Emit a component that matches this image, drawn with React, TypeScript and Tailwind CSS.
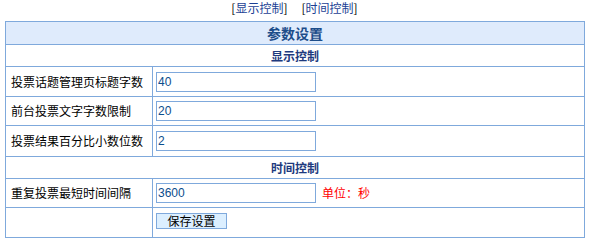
import React from "react";

const font = { fontFamily: '"Noto Sans CJK SC", "Liberation Sans", sans-serif' };
const inputFont = { fontFamily: '"Liberation Sans", Arial, sans-serif' };

function Row({ label, value, unit, h }: { label: string; value: string; unit?: string; h: string }) {
  return (
    <div className={`flex border-t border-[#7fa9dc] ${h}`}>
      <div className="w-[146px] flex items-center pl-[5px] text-[12px] text-black">{label}</div>
      <div className="flex-1 border-l border-[#7fa9dc] flex items-center pl-[3px]">
        <input
          readOnly
          value={value}
          className="w-[160px] h-[20px] border border-[#7fa9dc] px-[1px] text-[12px] text-[#0b4d8c] outline-none"
          style={inputFont}
        />
        {unit && <span className="ml-[6px] text-[12px] text-[#ff0000]">{unit}</span>}
      </div>
    </div>
  );
}

export default function App() {
  return (
    <div className="w-[589px] h-[242px] bg-white" style={font}>
      <div className="h-[21px] flex justify-center items-start text-[12px] leading-[16px] text-black">
        <span>
          [<a className="text-[#1c3f94]">显示控制</a>]
        </span>
        <span className="ml-[14px]">
          [<a className="text-[#1c3f94]">时间控制</a>]
        </span>
      </div>
      <div className="ml-[5px] w-[580px] border border-[#7fa9dc]">
        <div className="h-[22px] bg-[#dfebfc] flex items-center justify-center text-[14px] font-bold text-[#1d4d8a]">
          参数设置
        </div>
        <div className="h-[22px] border-t border-[#7fa9dc] flex items-center justify-center text-[12px] font-bold text-[#1e3a7e]">
          显示控制
        </div>
        <Row label="投票话题管理页标题字数" value="40" h="h-[30px]" />
        <Row label="前台投票文字字数限制" value="20" h="h-[29px]" />
        <Row label="投票结果百分比小数位数" value="2" h="h-[31px]" />
        <div className="h-[22px] border-t border-[#7fa9dc] flex items-center justify-center text-[12px] font-bold text-[#1e3a7e]">
          时间控制
        </div>
        <Row label="重复投票最短时间间隔" value="3600" unit="单位：秒" h="h-[29px]" />
        <div className="flex border-t border-[#7fa9dc] h-[30px]">
          <div className="w-[146px]" />
          <div className="flex-1 border-l border-[#7fa9dc] pl-[3px] pt-[5px]">
            <button className="w-[71px] h-[16px] bg-[#dcefff] border border-[#7fa9dc] text-[12px] leading-[14px] text-black flex items-center justify-center">
              保存设置
            </button>
          </div>
        </div>
      </div>
    </div>
  );
}
